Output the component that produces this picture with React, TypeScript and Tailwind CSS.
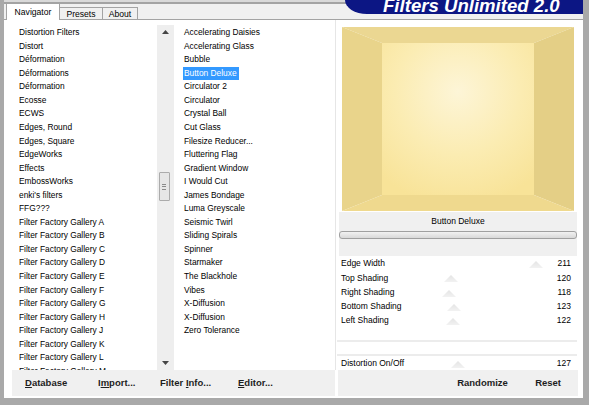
import React from "react";

const leftItems = [
  "Distortion Filters",
  "Distort",
  "Déformation",
  "Déformations",
  "Déformation",
  "Ecosse",
  "ECWS",
  "Edges, Round",
  "Edges, Square",
  "EdgeWorks",
  "Effects",
  "EmbossWorks",
  "enki's filters",
  "FFG???",
  "Filter Factory Gallery A",
  "Filter Factory Gallery B",
  "Filter Factory Gallery C",
  "Filter Factory Gallery D",
  "Filter Factory Gallery E",
  "Filter Factory Gallery F",
  "Filter Factory Gallery G",
  "Filter Factory Gallery H",
  "Filter Factory Gallery J",
  "Filter Factory Gallery K",
  "Filter Factory Gallery L",
  "Filter Factory Gallery M",
];

const midItems = [
  "Accelerating Daisies",
  "Accelerating Glass",
  "Bubble",
  "Button Deluxe",
  "Circulator 2",
  "Circulator",
  "Crystal Ball",
  "Cut Glass",
  "Filesize Reducer...",
  "Fluttering Flag",
  "Gradient Window",
  "I Would Cut",
  "James Bondage",
  "Luma Greyscale",
  "Seismic Twirl",
  "Sliding Spirals",
  "Spinner",
  "Starmaker",
  "The Blackhole",
  "Vibes",
  "X-Diffusion",
  "X-Diffusion",
  "Zero Tolerance",
];

type Row = { label?: string; value?: number; line?: boolean };
const rows: Row[] = [
  { label: "Edge Width", value: 211 },
  { label: "Top Shading", value: 120 },
  { label: "Right Shading", value: 118 },
  { label: "Bottom Shading", value: 123 },
  { label: "Left Shading", value: 122 },
  { line: true },
  { line: true },
  { label: "Distortion On/Off", value: 127 },
];

function Thumb({ value }: { value: number }) {
  const left = 2 + (value / 255) * 238 - 7;
  return (
    <svg
      className="absolute top-[5px]"
      style={{ left }}
      width="14"
      height="7"
      viewBox="0 0 14 7"
    >
      <defs>
        <linearGradient id="tg" x1="0" y1="0" x2="0" y2="1">
          <stop offset="0" stopColor="#e4e4e4" />
          <stop offset="1" stopColor="#f2f2f2" />
        </linearGradient>
      </defs>
      <polygon points="7,0 14,7 0,7" fill="url(#tg)" />
    </svg>
  );
}

function Preview() {
  return (
    <svg width="232" height="184" viewBox="0 0 232 184" className="block">
      <defs>
        <radialGradient id="face" cx="0.5" cy="0.32" r="0.75">
          <stop offset="0" stopColor="#fdf5d7" />
          <stop offset="0.55" stopColor="#fbecb2" />
          <stop offset="1" stopColor="#f8e398" />
        </radialGradient>
      </defs>
      <polygon points="0,0 232,0 192,16 40,16" fill="#ebd792" />
      <polygon points="0,0 40,16 40,168 0,184" fill="#e9d48b" />
      <polygon points="232,0 232,184 192,168 192,16" fill="#e4cf86" />
      <polygon points="0,184 40,168 192,168 232,184" fill="#efd98e" />
      <rect x="40" y="16" width="152" height="152" fill="url(#face)" />
    </svg>
  );
}

function BtnText({ pre, u, post }: { pre: string; u: string; post: string }) {
  return (
    <span>
      {pre}
      <span className="underline underline-offset-[1px]">{u}</span>
      {post}
    </span>
  );
}

export default function App() {
  return (
    <div className="relative w-[589px] h-[405px] overflow-hidden bg-white font-['Liberation_Sans',Arial,sans-serif] text-black border-l-[4px] border-r-[6px] border-b-[7px] border-[#a9a9a9] flex flex-col">
      {/* tab strip */}
      <div className="flex-none h-[20px] flex flex-col">
        <div className="h-[2px] bg-[#d9d9d9]" />
        <div className="h-[2px] bg-[#a3a3a3]" />
        <div className="flex-1 flex items-end bg-[#f0f0f0] border-b border-[#a3a3a3]">
          <div className="ml-[2px] -mb-px w-[54px] h-[16px] bg-white border-l border-r border-[#a3a3a3] flex items-center justify-center text-[8.6px] leading-none">
            Navigator
          </div>
          <div className="w-[43px] h-[12px] bg-[#f0f0f0] border-t border-r border-[#a3a3a3] flex items-center justify-center text-[8.6px] leading-none pt-[1px]">
            Presets
          </div>
          <div className="w-[35px] h-[12px] bg-[#f0f0f0] border-t border-r border-[#a3a3a3] flex items-center justify-center text-[8.6px] leading-none pt-[1px]">
            About
          </div>
        </div>
      </div>

      {/* banner */}
      <div className="absolute top-0 right-[-6px] w-[244px] h-[14px] bg-[#0c1684] rounded-bl-[22px_14px] overflow-hidden">
        <div className="mt-[-3px] pl-[38px] text-[18.6px] leading-none font-bold italic text-white whitespace-nowrap">
          Filters Unlimited 2.0
        </div>
      </div>

      {/* main area */}
      <div className="flex-none h-[350px] flex">
        {/* left list */}
        <div className="w-[153px] h-full overflow-hidden pl-[15px] pt-[6.2px] text-[8.4px] leading-[13.56px]">
          {leftItems.map((t, i) => (
            <div key={i} className="h-[13.56px] whitespace-nowrap">
              {t}
            </div>
          ))}
        </div>

        {/* scrollbar */}
        <div className="w-[17px] mt-[5px] h-[345px] bg-[#eeeeee] flex flex-col items-center">
          <div className="h-[14px] w-full flex items-center justify-center">
            <svg width="7" height="4" viewBox="0 0 7 4">
              <polygon points="3.5,0 7,4 0,4" fill="#444" />
            </svg>
          </div>
          <div className="mt-[133px] ml-[-3px] w-[11px] h-[29px] rounded-[1px] border border-[#ababab] bg-[#e6e6e6] flex flex-col items-center justify-center gap-[1.5px]">
            <div className="w-[4px] h-px bg-[#8a8a8a]" />
            <div className="w-[4px] h-px bg-[#8a8a8a]" />
            <div className="w-[4px] h-px bg-[#8a8a8a]" />
          </div>
          <div className="flex-1" />
          <div className="h-[14px] w-full flex items-center justify-center">
            <svg width="7" height="4" viewBox="0 0 7 4">
              <polygon points="0,0 7,0 3.5,4" fill="#444" />
            </svg>
          </div>
        </div>

        {/* middle list */}
        <div className="w-[161px] h-full overflow-hidden pl-[9px] pt-[6.2px] text-[8.4px] leading-[13.56px]">
          {midItems.map((t, i) => (
            <div key={i} className="h-[13.56px] whitespace-nowrap">
              {i === 3 ? (
                <span className="inline-block bg-[#3399ff] text-white pl-[1px] pr-[2px]">{t}</span>
              ) : (
                <span className="pl-[1px]">{t}</span>
              )}
            </div>
          ))}
        </div>

        <div className="w-px h-full bg-[#e6e6e6]" />

        {/* right panel */}
        <div className="flex-1 flex flex-col">
          <div className="mt-[7px] ml-[6px]">
            <Preview />
          </div>
          <div className="mt-[1px] ml-[3px] w-[238px] h-[44px] bg-[#f0f0f0] flex flex-col">
            <div className="h-[18px] flex items-center justify-center text-[8.5px] leading-none pt-[1px]">
              Button Deluxe
            </div>
            <div className="mt-[1px] h-[8px] rounded-[3px] border border-[#a0a0a0] bg-gradient-to-b from-[#f2f2f2] to-[#d9d9d9]" />
          </div>
          <div className="ml-[1px] w-[240px] flex flex-col">
            {rows.map((r, i) => (
              <div
                key={i}
                className="relative h-[14.25px] flex items-center justify-between pl-[4px] pr-[6px] pt-[1px] text-[8.5px] leading-none"
              >
                {r.line && <div className="absolute left-0 right-0 bottom-0 h-[2px] bg-[#ececec]" />}
                {r.value !== undefined && <Thumb value={r.value} />}
                <span className="relative">{r.label}</span>
                <span className="relative">{r.value}</span>
              </div>
            ))}
          </div>
        </div>
      </div>

      {/* bottom bar */}
      <div className="flex-none h-[28px] flex pb-[2px]">
        <div className="ml-[8px] w-[323px] h-[26px] bg-[#f0f0f0] flex items-center pl-[13px] pt-[1px] text-[9.5px] font-bold text-[#1e1e1e]">
          <div className="w-[73px]">
            <BtnText pre="" u="D" post="atabase" />
          </div>
          <div className="w-[62px]">
            <BtnText pre="I" u="m" post="port..." />
          </div>
          <div className="w-[78px]">
            <BtnText pre="Filter " u="I" post="nfo..." />
          </div>
          <div>
            <BtnText pre="" u="E" post="ditor..." />
          </div>
        </div>
        <div className="ml-[3px] w-[240px] h-[26px] bg-[#f0f0f0] flex items-center justify-end pr-[17px] pt-[1px] text-[9.5px] font-bold text-[#1e1e1e]">
          <div className="w-[78px]">Randomize</div>
          <div>Reset</div>
        </div>
      </div>
    </div>
  );
}
